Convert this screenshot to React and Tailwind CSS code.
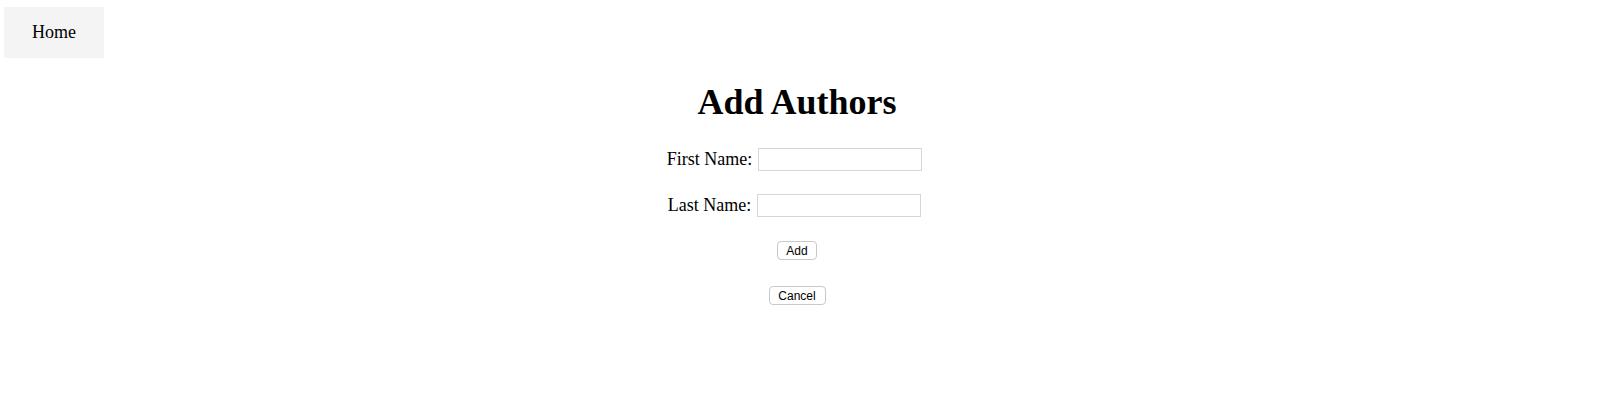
export default function App() {
  return (
    <div className="min-h-[409px] bg-white text-black" style={{ fontFamily: '"Liberation Serif", "Times New Roman", serif' }}>
      <div className="pl-[4px] pt-[7px]">
        <div className="flex h-[51px] w-[100px] items-center justify-center bg-[#f4f4f4] text-[18px]">Home</div>
      </div>
      <div className="flex flex-col items-center pr-[6px]">
        <h1 className="mt-[24px] text-[36px] font-bold leading-[41px]">Add Authors</h1>
        <div className="mt-[25px] flex flex-col items-center">
          <div className="flex h-[23px] items-center gap-[6px] pr-[5px] text-[18px]">
            <span>First Name:</span>
            <input className="h-[23px] w-[164px] border border-[#d6d6d6] bg-white" />
          </div>
          <div className="mt-[23px] flex h-[23px] items-center gap-[6px] pr-[5px] text-[18px]">
            <span>Last Name:</span>
            <input className="h-[23px] w-[164px] border border-[#d6d6d6] bg-white" />
          </div>
          <button className="mt-[24px] h-[19px] w-[40px] rounded-[4px] border border-[#c9c9c9] bg-white text-[12px] leading-none" style={{ fontFamily: '"Liberation Sans", Arial, sans-serif' }}>Add</button>
          <button className="mt-[26px] h-[19px] w-[57px] rounded-[4px] border border-[#c9c9c9] bg-white text-[12px] leading-none" style={{ fontFamily: '"Liberation Sans", Arial, sans-serif' }}>Cancel</button>
        </div>
      </div>
    </div>
  );
}
